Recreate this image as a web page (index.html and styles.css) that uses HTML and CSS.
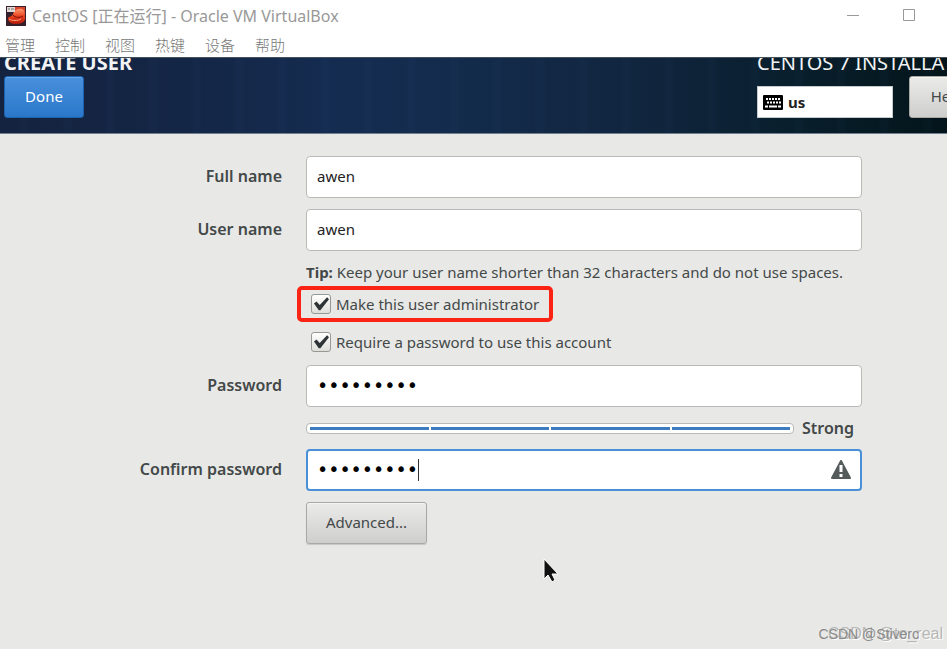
FILE: index.html
```html
<!DOCTYPE html>
<html lang="en">
<head>
<meta charset="utf-8">
<title>CentOS [正在运行] - Oracle VM VirtualBox</title>
<link rel="stylesheet" href="styles.css">
</head>
<body>
<header class="titlebar">
  <div class="title-row">
    <svg class="app-icon" viewBox="0 0 20 20" aria-hidden="true">
      <defs><linearGradient id="hat" x1="0" y1="0" x2="0" y2="1"><stop offset="0" stop-color="#ff9a6c"/><stop offset=".5" stop-color="#e9401d"/><stop offset="1" stop-color="#b21c0c"/></linearGradient></defs>
      <rect width="20" height="20" fill="#35202b"/>
      <path d="M9 1h10v13H9z" fill="#d8452a"/>
      <path d="M2 12c1-2 4-1 5-4 1-4 5-6 9-5 3 1 3 5 2 8 2 4-1 7-8 7-5 0-8-2-8-6z" fill="url(#hat)"/>
      <path d="M7 9c2 3 7 3 10 1" stroke="#7a120c" stroke-width="1" fill="none"/>
      <path d="M3 13c3 2 9 2 12 0" stroke="#ffa27c" stroke-width="1" fill="none"/>
      <path d="M1 1h8v5H1z" fill="#e2dada"/><path d="M2 3h2m1 0h3" stroke="#776" />
    </svg>
    <h1 class="window-title">CentOS [正在运行] - Oracle VM VirtualBox</h1>
    <div class="window-controls">
      <button type="button" aria-label="Minimize"><svg width="14" height="14" viewBox="0 0 14 14"><path d="M1 6.500h12" stroke="#999" fill="none"/></svg></button>
      <button type="button" aria-label="Maximize"><svg width="14" height="14" viewBox="0 0 14 14"><path d="M1.500 .5h11v11h-11z" stroke="#999" fill="none"/></svg></button>
    </div>
  </div>
  <nav class="menu">
    <a href="#">管理</a><a href="#">控制</a><a href="#">视图</a><a href="#">热键</a><a href="#">设备</a><a href="#">帮助</a>
  </nav>
</header>
<section class="banner">
  <div class="banner-main">
    <h2 class="screen-title">CREATE USER</h2>
    <button type="button" class="button primary">Done</button>
  </div>
  <div class="banner-side">
    <p class="product">CENTOS 7 INSTALLATION</p>
    <div class="side-actions">
      <button type="button" class="keyboard">
        <svg width="20" height="15" viewBox="0 0 20 15" aria-hidden="true"><rect width="20" height="15" rx="1" fill="#000"/><path d="M3 4h14" stroke="#fff" stroke-width="2" stroke-dasharray="2 1"/><path d="M4 7.500h14" stroke="#fff" stroke-width="2" stroke-dasharray="2 1"/><path d="M2 11.500h3m1 0h8m1 0h3" stroke="#fff" stroke-width="2"/></svg>
        us
      </button>
      <button type="button" class="button help">Help!</button>
    </div>
  </div>
</section>
<main class="content">
  <form class="form">
    <label for="full">Full name</label>
    <input class="entry" id="full" type="text" value="awen">
    <label for="user">User name</label>
    <input class="entry" id="user" type="text" value="awen">
    <div class="options">
      <p class="tip"><b>Tip:</b> Keep your user name shorter than 32 characters and do not use spaces.</p>
      <label class="check highlighted"><input type="checkbox" checked>Make this user administrator</label>
      <label class="check"><input type="checkbox" checked>Require a password to use this account</label>
    </div>
    <label for="pass">Password</label>
    <input class="entry secret" id="pass" type="password" value="awen12345">
    <div class="strength">
      <div class="bar" role="meter" aria-label="Password strength" aria-valuemin="0" aria-valuemax="4" aria-valuenow="4"><span></span><span></span><span></span><span></span></div>
      <output>Strong</output>
    </div>
    <label for="confirm">Confirm password</label>
    <div class="confirm">
      <input class="entry secret active" id="confirm" type="password" value="awen12345">
      <i class="caret"></i>
      <svg class="warning" width="20" height="19" viewBox="0 0 20 19" aria-hidden="true"><path d="M10 1 19 18H1z" fill="#555b5b" stroke="#555b5b" stroke-width="2" stroke-linejoin="round"/><path d="M10 5v7M10 14v3" stroke="#fff" stroke-width="3"/></svg>
    </div>
    <button type="button" class="button advanced">Advanced...</button>
  </form>
  <svg class="pointer" width="16" height="26" viewBox="0 0 16 26" aria-hidden="true"><path d="M1 1v20l4-4 4 7 3-2-3-6h6z" fill="#111" stroke="#fff" stroke-width="1"/></svg>
  <div class="watermark"><span class="mark-small">CSDN @Stiverc</span><span class="mark-large">CSDN @to_real</span></div>
</main>
</body>
</html>
```
FILE: styles.css
```css
* { box-sizing: border-box; }
body {
  margin: 0;
  min-height: 100vh;
  display: flex;
  flex-direction: column;
  overflow: hidden;
  background: #e8e8e6;
  color: #434849;
  font: 15px/20px "Noto Sans", "Noto Sans CJK SC", sans-serif;
}
button, input { font: inherit; color: inherit; }
h1, h2, p { margin: 0; font-weight: 400; }

.titlebar { background: #fff; color: #999; height: 57px; }
.title-row { display: flex; align-items: center; height: 31px; padding: 0 31px 0 6px; }
.app-icon { width: 20px; height: 20px; margin-right: 6px; }
.window-title { font-size: 16px; line-height: 20px; }
.window-controls { margin-left: auto; display: flex; gap: 42px; }
.window-controls button { width: 14px; height: 14px; padding: 0; border: 0; background: none; }
.window-controls svg { display: block; }
.menu { display: flex; gap: 20px; padding: 4px 5px; font: 300 15px/20px "Noto Sans CJK SC", sans-serif; }
.menu a { color: #777; text-decoration: none; }

.banner {
  display: flex;
  height: 77px;
  overflow: hidden;
  border-top: 1px solid #43515c;
  border-bottom: 1px solid #6f7f8d;
  background:
    repeating-linear-gradient(90deg, transparent 0 18px, rgba(60, 100, 160, .04) 22px 27px, transparent 30px 43px),
    linear-gradient(90deg, #14233f 0%, #142646 20%, #142c50 35%, #132b4b 50%, #10243c 70%, #081e2b 85%, #03151a 100%);
}
.banner-main { flex: 1; padding-left: 4px; }
.banner-side { flex: 0 0 190px; min-width: 0; }
.screen-title, .product { height: 18px; line-height: 10px; font-size: 20px; color: #f2f3f4; white-space: nowrap; }
.screen-title { font-weight: 700; }
.side-actions { display: flex; gap: 16px; align-items: flex-end; }
.button {
  height: 42px;
  padding: 0 19px 2px;
  border: 1px solid #a8a8a5;
  border-radius: 3px;
  background: linear-gradient(#ebebe9, #cececc);
  box-shadow: inset 0 1px #f5f5f4, 0 1px 1px rgba(0, 0, 0, .15);
}
.primary { width: 80px; border-color: #1d62ae; background: linear-gradient(#4990dc, #2a77ca); box-shadow: inset 0 1px #68a6e5; color: #fff; }
.keyboard { display: flex; align-items: center; gap: 5px; flex: 0 0 136px; height: 32px; padding: 0 5px; border: 1px solid #c5cacc; background: #fff; color: #222; font-weight: 700; }
.help { flex: 0 0 80px; }

.content { flex: 1; position: relative; padding: 22px 85px 22px 0; }
.form { display: grid; grid-template-columns: 282px minmax(0, 1fr); column-gap: 24px; row-gap: 11px; align-items: center; }
.form > label { justify-self: end; padding-bottom: 2px; font-size: 16px; font-weight: 600; }
.entry { display: block; width: 100%; height: 42px; padding: 0 10px 2px; border: 1px solid #b9bab7; border-radius: 4px; background: #fff; color: #222; outline: 0; }
.active { border: 2px solid #4a90d9; padding: 0 9px 2px; }
.secret { color: #000; font-family: "DejaVu Sans", sans-serif; font-size: 19px; }
.options, .strength, .advanced { grid-column: 2; }
.options { display: flex; flex-direction: column; align-items: flex-start; }
.tip { white-space: nowrap; margin-bottom: 4px; }
.check { display: flex; align-items: center; gap: 5px; height: 24px; padding-left: 5px; }
.check input {
  appearance: none;
  width: 20px;
  height: 20px;
  margin: 0;
  border: 1px solid #989996;
  border-radius: 3px;
  background: linear-gradient(#fff, #deded9);
  display: grid;
  place-items: center;
}
.check input::before { content: ""; width: 16px; height: 14px; background: #2e3436; clip-path: polygon(6% 46%, 22% 33%, 42% 57%, 88% 2%, 100% 16%, 46% 94%, 36% 94%); }
.highlighted { height: 36px; margin: 0 0 8px -9px; padding: 0 10px; border: 4px solid #fa2314; border-radius: 5px; }
.strength { display: flex; align-items: center; gap: 8px; padding-right: 8px; }
.strength output { font-size: 16px; font-weight: 600; }
.bar { flex: 1; display: flex; gap: 2px; height: 11px; padding: 3px; border: 1px solid #b9bab7; border-radius: 4px; background: #fff; }
.bar span { flex: 1; background: #3d7cc0; }
.confirm { position: relative; }
.caret { position: absolute; left: 112px; top: 10px; width: 1px; height: 22px; background: #333; }
.warning { position: absolute; right: 11px; top: 11px; }
.advanced { justify-self: start; }
.pointer { position: absolute; left: 543px; top: 424px; }
.watermark { position: absolute; right: 4px; bottom: 5px; height: 20px; font: 16px/20px "Liberation Sans", sans-serif; white-space: nowrap; }
.mark-large { color: #b7b7b5; text-shadow: 1px 1px #fff; }
.mark-small { position: absolute; right: 24px; color: #8a8a8a; font-size: 14px; }
```
